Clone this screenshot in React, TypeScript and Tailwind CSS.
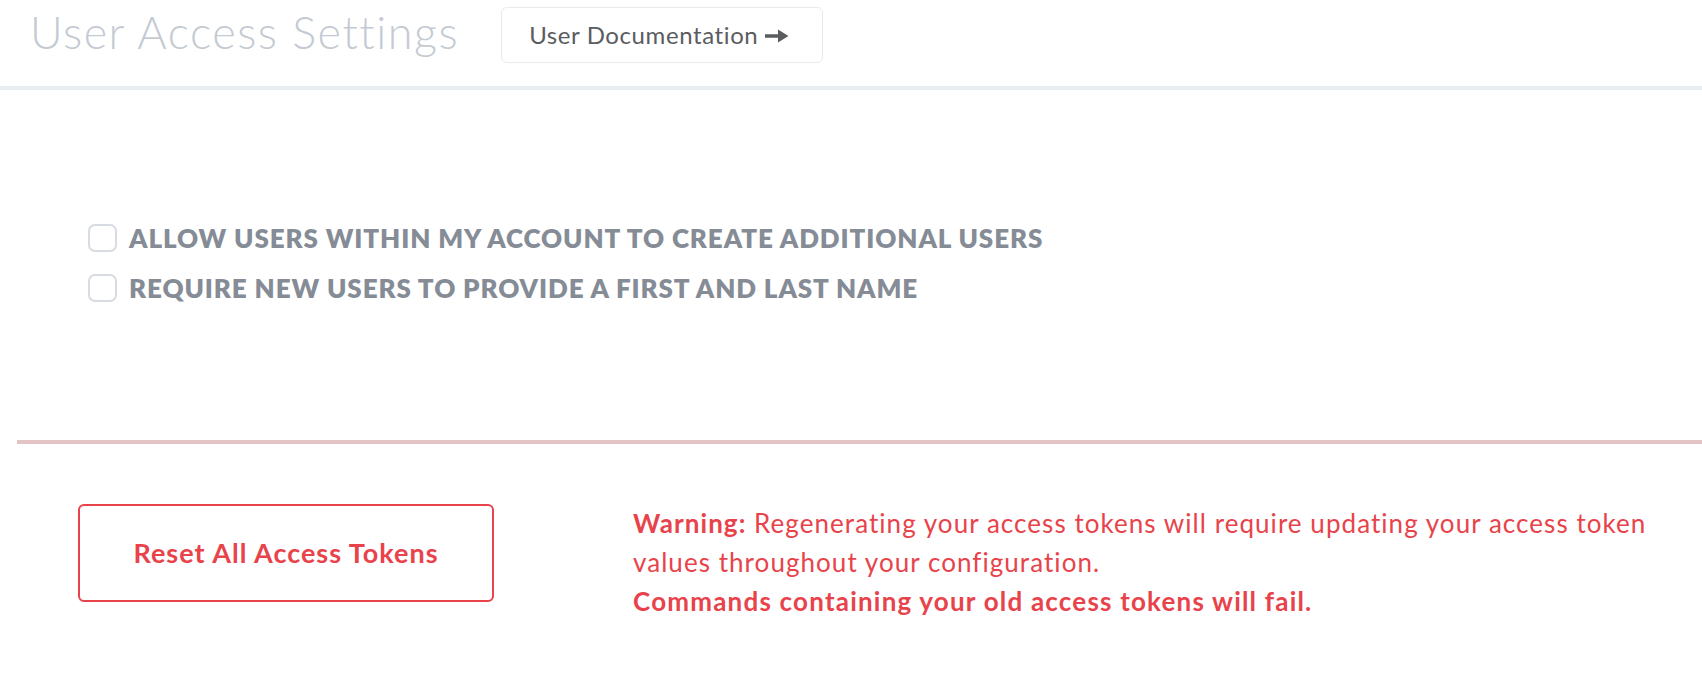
export default function App() {
  return (
    <div className="min-h-screen bg-white" style={{ fontFamily: "Lato, 'Open Sans', sans-serif" }}>
      <header className="flex items-start h-[90px] border-b-4 border-[#e9edf2]">
        <h1 className="ml-[30px] mt-[6px] text-[45px] leading-[52px] font-light tracking-[1.5px] text-[#c4cad2]">
          User Access Settings
        </h1>
        <a
          href="#"
          className="ml-[42px] mt-[7px] flex items-center h-[56px] w-[322px] rounded-md border border-[#e8eaed] pl-[27px] text-[24px] tracking-[0.6px] text-[#5a5c60]"
        >
          User Documentation
          <svg className="ml-[6px] mt-[2px]" width="26" height="16" viewBox="0 0 26 16">
            <path d="M1 8h15" stroke="#5a5c60" strokeWidth="3.5" />
            <path d="M14 1.5 24.5 8 14 14.5z" fill="#5a5c60" />
          </svg>
        </a>
      </header>

      <section className="pt-[134px] pl-[88px] h-[350px] flex flex-col gap-[22px]">
        {[
          "ALLOW USERS WITHIN MY ACCOUNT TO CREATE ADDITIONAL USERS",
          "REQUIRE NEW USERS TO PROVIDE A FIRST AND LAST NAME",
        ].map((label) => (
          <label key={label} className="flex items-center gap-[12px] cursor-pointer">
            <span className="w-[29px] h-[28px] rounded-[7px] border-2 border-[#d6dce2] bg-white" />
            <span className="text-[26px] leading-[28px] font-extrabold text-[#858c96] tracking-[0.9px]">
              {label}
            </span>
          </label>
        ))}
      </section>

      <div className="ml-[17px] h-[4px] bg-[#e2c4c7]" />

      <section className="flex items-start pt-[60px]">
        <button className="ml-[78px] w-[416px] h-[98px] shrink-0 rounded-md border-2 border-[#e8434b] text-[27px] font-bold tracking-[1px] text-[#e8434b]">
          Reset All Access Tokens
        </button>
        <div className="ml-[139px] text-[26px] leading-[39px] text-[#e8434b] max-w-[1060px]">
          <p className="tracking-[1.05px]">
            <span className="font-bold">Warning:</span> Regenerating your access tokens will require updating your access token values throughout your configuration.
          </p>
          <p className="font-bold tracking-[1.2px]">Commands containing your old access tokens will fail.</p>
        </div>
      </section>
    </div>
  );
}
